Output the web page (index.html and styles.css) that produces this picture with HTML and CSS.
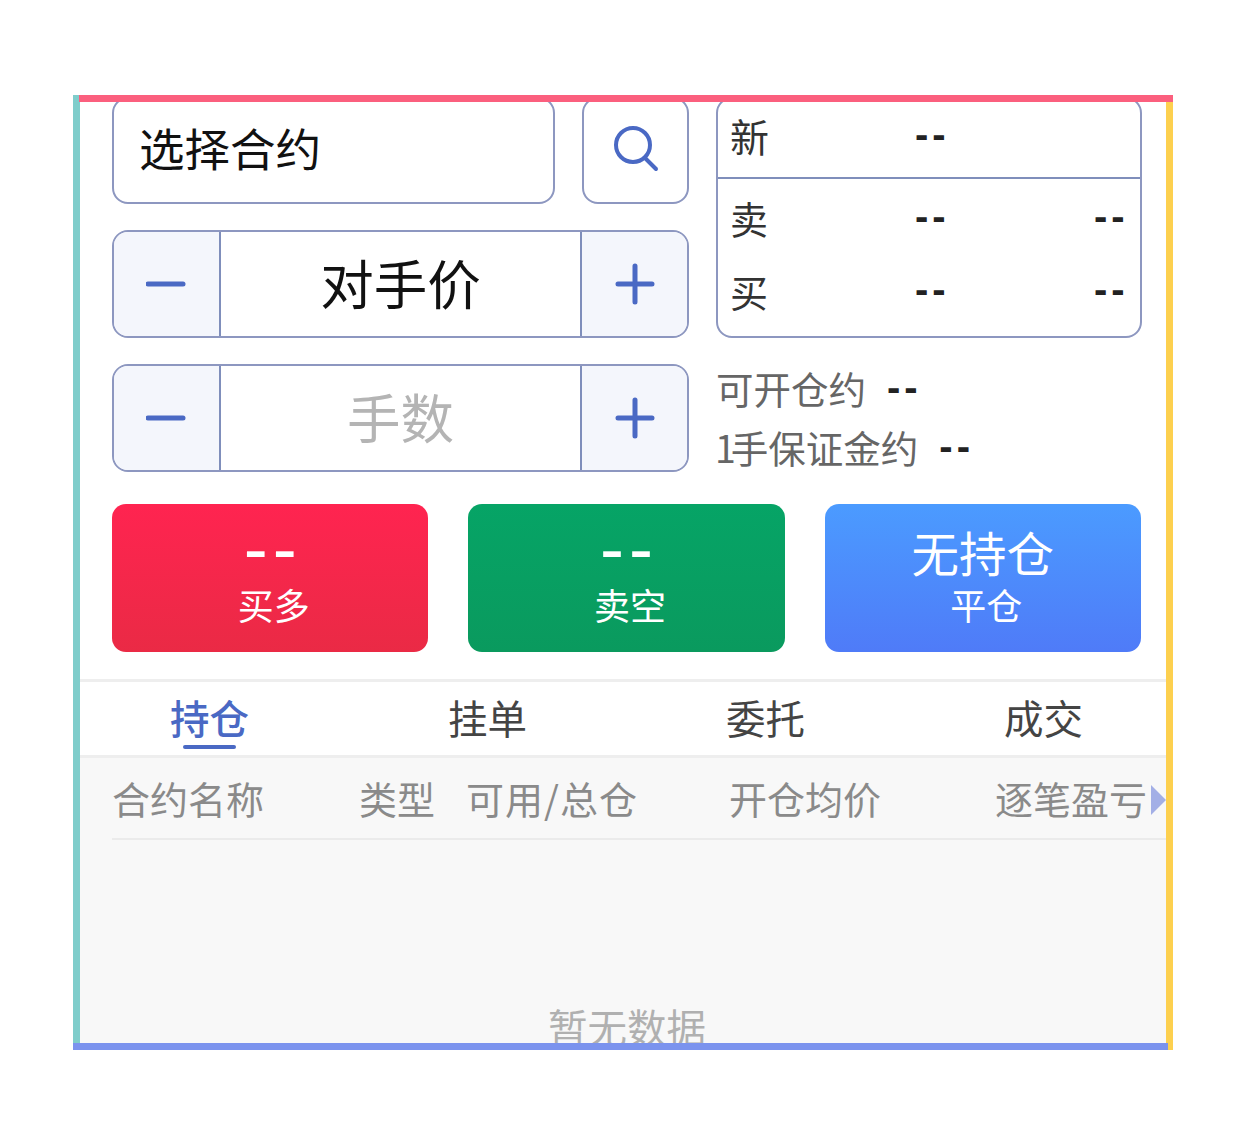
FILE: index.html
```html
<!DOCTYPE html>
<html lang="zh-CN">
<head>
    <meta charset="UTF-8">
    <meta name="viewport" content="width=device-width, initial-scale=1.0">
    <title>交易</title>
    <link rel="stylesheet" href="styles.css">
</head>
<body>
    <div class="frame">
        <div class="frame-inner">
            <div class="order">
                <div class="order-left">
                    <div class="search-row">
                        <div class="select-box">选择合约</div>
                        <div class="search-btn">
                            <svg width="48" height="48" viewBox="0 0 48 48" fill="none" stroke="#4a69c4" stroke-width="4" stroke-linecap="round">
                                <circle cx="21" cy="21" r="17"></circle>
                                <path d="M33 34 L44 45"></path>
                            </svg>
                        </div>
                    </div>
                    <div class="stepper">
                        <div class="step-btn">
                            <svg width="42" height="42" viewBox="0 0 42 42" stroke="#4a69c4" stroke-width="5" stroke-linecap="round"><path d="M2 21 H37"></path></svg>
                        </div>
                        <div class="step-value">对手价</div>
                        <div class="step-btn">
                            <svg width="42" height="42" viewBox="0 0 42 42" stroke="#4a69c4" stroke-width="5" stroke-linecap="round"><path d="M4 21 H38 M21 3 V39"></path></svg>
                        </div>
                    </div>
                    <div class="stepper">
                        <div class="step-btn">
                            <svg width="42" height="42" viewBox="0 0 42 42" stroke="#4a69c4" stroke-width="5" stroke-linecap="round"><path d="M2 21 H37"></path></svg>
                        </div>
                        <div class="step-value placeholder">手数</div>
                        <div class="step-btn">
                            <svg width="42" height="42" viewBox="0 0 42 42" stroke="#4a69c4" stroke-width="5" stroke-linecap="round"><path d="M4 21 H38 M21 3 V39"></path></svg>
                        </div>
                    </div>
                </div>
                <div class="order-right">
                    <div class="quote">
                        <div class="quote-last">
                            <span>新</span><span class="dash">--</span>
                        </div>
                        <div class="quote-book">
                            <div class="quote-row"><span>卖</span><span class="dash">--</span><span class="dash">--</span></div>
                            <div class="quote-row"><span>买</span><span class="dash">--</span><span class="dash">--</span></div>
                        </div>
                    </div>
                    <div class="info">
                        <div class="info-line">可开仓约<span class="dash">--</span></div>
                        <div class="info-line"><span class="digit">1</span>手保证金约<span class="dash">--</span></div>
                    </div>
                </div>
            </div>

            <div class="actions">
                <div class="action action-buy">
                    <div class="action-price">--</div>
                    <div class="action-label">买多</div>
                </div>
                <div class="action action-sell">
                    <div class="action-price">--</div>
                    <div class="action-label">卖空</div>
                </div>
                <div class="action action-close">
                    <div class="action-title">无持仓</div>
                    <div class="action-label">平仓</div>
                </div>
            </div>

            <div class="tabs">
                <div class="tab tab-active">持仓</div>
                <div class="tab">挂单</div>
                <div class="tab">委托</div>
                <div class="tab">成交</div>
            </div>

            <div class="table">
                <div class="table-head">
                    <div class="col col-name">合约名称</div>
                    <div class="col col-type">类型</div>
                    <div class="col col-amount">可用/总仓</div>
                    <div class="col col-price">开仓均价</div>
                    <div class="col">逐笔盈亏</div>
                    <div class="more"></div>
                </div>
                <div class="empty">暂无数据</div>
            </div>
        </div>
    </div>
</body>
</html>
```

FILE: styles.css
```css
* {
    margin: 0;
    padding: 0;
    box-sizing: border-box;
}

body {
    background-color: #fff;
    font-family: "Noto Sans CJK SC", "Noto Sans", sans-serif;
    color: #222;
}

/* coloured outline, each side overlaps its neighbour */
.frame {
    width: 1100px;
    height: 955px;
    margin: 95px 0 95px 73px;
    padding: 7px;
    background:
        linear-gradient(#fb5f7e, #fb5f7e) 6px 0 / 1094px 7px no-repeat,
        linear-gradient(#7b93ee, #7b93ee) 0 100% / 1095px 7px no-repeat,
        linear-gradient(#7fcdcb, #7fcdcb) 0 0 / 7px 100% no-repeat,
        linear-gradient(#fdd04f, #fdd04f) 100% 0 / 7px 100% no-repeat;
}

.frame-inner {
    display: flex;
    flex-direction: column;
    overflow: hidden;
    height: 100%;
    background-color: #fff;
}

/* order form, top is cut off by the frame */
.order {
    flex-shrink: 0;
    display: flex;
    gap: 27px;
    margin-top: -5px;
    padding: 0 24px 0 32px;
}

.order-left {
    display: flex;
    flex-direction: column;
    gap: 26px;
    width: 577px;
}

.search-row {
    display: flex;
    gap: 27px;
}

.select-box {
    display: flex;
    align-items: center;
    width: 443px;
    height: 107px;
    padding: 0 0 7px 25px;
    border: 2px solid #8d97c0;
    border-radius: 16px;
    font-size: 45.5px;
    color: #111;
}

.search-btn {
    display: flex;
    justify-content: center;
    align-items: center;
    width: 107px;
    height: 107px;
    padding-bottom: 5px;
    border: 2px solid #8d97c0;
    border-radius: 16px;
}

.stepper {
    display: flex;
    height: 108px;
    overflow: hidden;
    border: 2px solid #8d97c0;
    border-radius: 16px;
}

.step-btn {
    display: flex;
    justify-content: center;
    align-items: center;
    width: 105px;
    background-color: #f4f6fc;
}

.step-value {
    flex: 1;
    display: flex;
    justify-content: center;
    align-items: center;
    padding-bottom: 6px;
    border-left: 2px solid #7f8ebb;
    border-right: 2px solid #7f8ebb;
    font-size: 53.5px;
    color: #111;
}

.placeholder {
    color: #b4b4b4;
}

.order-right {
    flex: 1;
}

.quote {
    height: 241px;
    border: 2px solid #8d97c0;
    border-radius: 16px;
}

.quote-last {
    display: grid;
    grid-template-columns: 185px 1fr;
    align-items: center;
    height: 80px;
    padding: 0 0 7px 12px;
    border-bottom: 2px solid #7f8ebb;
    font-size: 39px;
    color: #333;
}

.quote-book {
    padding-top: 2px;
}

.quote-row {
    display: grid;
    grid-template-columns: 185px 179px 1fr;
    align-items: center;
    height: 73px;
    padding-left: 12px;
    font-size: 38px;
    color: #333;
}

.quote-row .dash {
    padding-bottom: 2px;
}

.dash {
    font-family: "Liberation Sans", sans-serif;
    font-size: 40px;
    font-weight: bold;
    letter-spacing: 4px;
    color: #222;
}

.info {
    margin-top: 20px;
}

.info-line {
    height: 59px;
    line-height: 59px;
    font-size: 37.5px;
    color: #666;
}

.info-line .dash {
    margin-left: 21px;
    vertical-align: 3px;
}

.digit {
    margin-left: -1px;
    letter-spacing: -5px;
}

/* buy / sell / close */
.actions {
    flex-shrink: 0;
    display: flex;
    gap: 40px;
    margin-top: 28px;
    padding: 0 25px 0 32px;
}

.action {
    flex: 1;
    display: flex;
    flex-direction: column;
    align-items: center;
    height: 148px;
    border-radius: 14px;
    color: #fff;
}

.action-buy {
    background: linear-gradient(#ff2450, #ea2a45);
}

.action-sell {
    background: linear-gradient(#06a466, #0a9a5e);
}

.action-close {
    background: linear-gradient(#4b9bff, #4f7bf8);
}

.action-price {
    height: 78px;
    padding: 13px 0 0 5px;
    line-height: 62px;
    font-family: "Liberation Sans", sans-serif;
    font-size: 72px;
    letter-spacing: 5px;
}

.action-title {
    height: 78px;
    padding-top: 17px;
    line-height: 61px;
    font-size: 47.5px;
}

.action-label {
    padding-left: 7px;
    line-height: 44px;
    font-size: 36px;
}

/* tabs */
.tabs {
    flex-shrink: 0;
    display: flex;
    gap: 199px;
    height: 79px;
    margin-top: 27px;
    padding-left: 90px;
    border-top: 3px solid #eee;
    border-bottom: 3px solid #eee;
}

.tab {
    position: relative;
    line-height: 70px;
    font-size: 39.5px;
    color: #444;
}

.tab-active {
    font-weight: 500;
    color: #4a69c4;
}

.tab-active::after {
    content: "";
    position: absolute;
    left: 13px;
    bottom: 6px;
    width: 53px;
    height: 4px;
    border-radius: 2px;
    background-color: #4a69c4;
}

/* positions table */
.table {
    flex: 1;
    min-height: 0;
    background-color: #f8f8f8;
}

.table-head {
    position: relative;
    display: flex;
    align-items: center;
    height: 82px;
    padding-bottom: 2px;
    margin-left: 32px;
    border-bottom: 2px solid #ebebeb;
    font-size: 38px;
    color: #8a8a8a;
}

.col {
    white-space: nowrap;
}

.col-name {
    width: 247px;
}

.col-type {
    width: 107px;
}

.col-amount {
    width: 263px;
    letter-spacing: 1px;
}

.col-price {
    width: 266px;
}

.more {
    position: absolute;
    right: 0;
    top: 27px;
    width: 0;
    height: 0;
    border-top: 15px solid transparent;
    border-bottom: 15px solid transparent;
    border-left: 15px solid #a3afe6;
}

.empty {
    padding: 158px 0 0 8px;
    text-align: center;
    line-height: 56px;
    font-size: 39.5px;
    color: #b0b0b0;
}
```
